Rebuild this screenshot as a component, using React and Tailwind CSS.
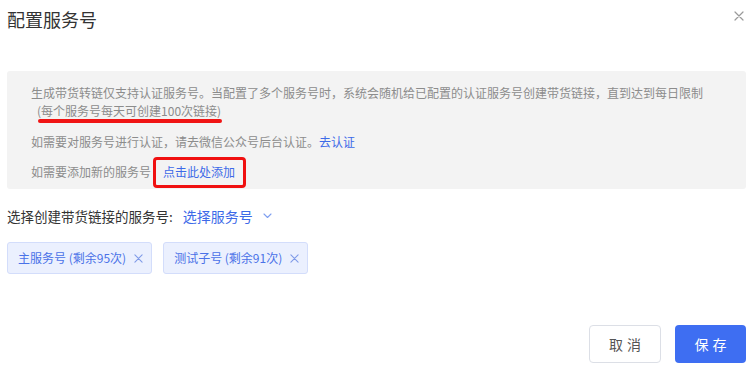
import React from "react";

const tags = [
  { id: 1, label: "主服务号 (剩余95次)" },
  { id: 2, label: "测试子号 (剩余91次)" },
];

function CloseIcon({ size = 10, color = "#9a9a9a" }) {
  return (
    <svg width={size} height={size} viewBox="0 0 10 10" fill="none">
      <path d="M1 1L9 9M9 1L1 9" stroke={color} strokeWidth="1.2" strokeLinecap="round" />
    </svg>
  );
}

function App() {
  return (
    <div className="w-[753px] h-[371px] bg-white px-[7px] font-['Noto_Sans_CJK_SC',sans-serif] flex flex-col">
      {/* header */}
      <div className="h-[36px] flex items-center justify-between">
        <div className="text-[18px] leading-[20px] text-[#333] mt-[1px]">配置服务号</div>
        <div className="mr-[2px] mt-[-5px]">
          <CloseIcon />
        </div>
      </div>

      {/* notice box */}
      <div className="mt-[35px] bg-[#f3f3f3] rounded-[3px] pl-[24px] pr-[20px] pt-[13px] pb-[8px] text-[12px] leading-[18px] text-[#8c8c8c]">
        <div>
          生成带货转链仅支持认证服务号。当配置了多个服务号时，系统会随机给已配置的认证服务号创建带货链接，直到达到每日限制
        </div>
        <div className="pl-[6px]">
          <span className="relative">
            (每个服务号每天可创建100次链接)
            <span className="absolute left-[1px] right-[-1px] bottom-[-4px] h-[4px] bg-[#f01414] rounded-full"></span>
          </span>
        </div>
        <div className="mt-[13px]">
          如需要对服务号进行认证，请去微信公众号后台认证。
          <span className="text-[#3d6ae8]">去认证</span>
        </div>
        <div className="mt-[12px]">
          如需要添加新的服务号
          <span className="relative ml-[12px] text-[#3d6ae8]">
            点击此处添加
            <span className="absolute left-[-10px] right-[-11px] top-[-6px] bottom-[-8px] border-[3.5px] border-[#f01010] rounded-[4px]"></span>
          </span>
        </div>
      </div>

      {/* selector */}
      <div className="mt-[17px] flex items-center text-[13.5px] leading-[20px]">
        <span className="text-[#333]">选择创建带货链接的服务号:</span>
        <span className="ml-[10px] text-[14px] text-[#3d6ae8]">选择服务号</span>
        <svg className="ml-[10px]" width="9" height="6" viewBox="0 0 9 6" fill="none">
          <path d="M1 1L4.5 4.5L8 1" stroke="#7f9ff0" strokeWidth="1.1" strokeLinecap="round" strokeLinejoin="round" />
        </svg>
      </div>

      <div className="mt-[16px] flex gap-[11px]">
        {tags.map((t) => (
          <div
            key={t.id}
            className="h-[32px] flex items-center pl-[10px] pr-[8px] bg-[#ebf0fe] border border-[#d3ddfb] rounded-[3px] text-[12px] text-[#4a72e8]"
          >
            <span>{t.label}</span>
            <span className="ml-[8px]">
              <CloseIcon size={9} color="#7f9ae8" />
            </span>
          </div>
        ))}
      </div>

      {/* footer */}
      <div className="mt-auto mb-[8px] flex justify-end gap-[14px]">
        <button className="w-[72px] h-[38px] border border-[#dcdfe6] rounded-[4px] bg-white text-[14px] text-[#555] tracking-[4px] pl-[4px]">
          取消
        </button>
        <button className="w-[71px] h-[38px] rounded-[4px] bg-[#3e6ef2] text-[14px] text-white tracking-[4px] pl-[4px]">
          保存
        </button>
      </div>
    </div>
  );
}

export default App;
